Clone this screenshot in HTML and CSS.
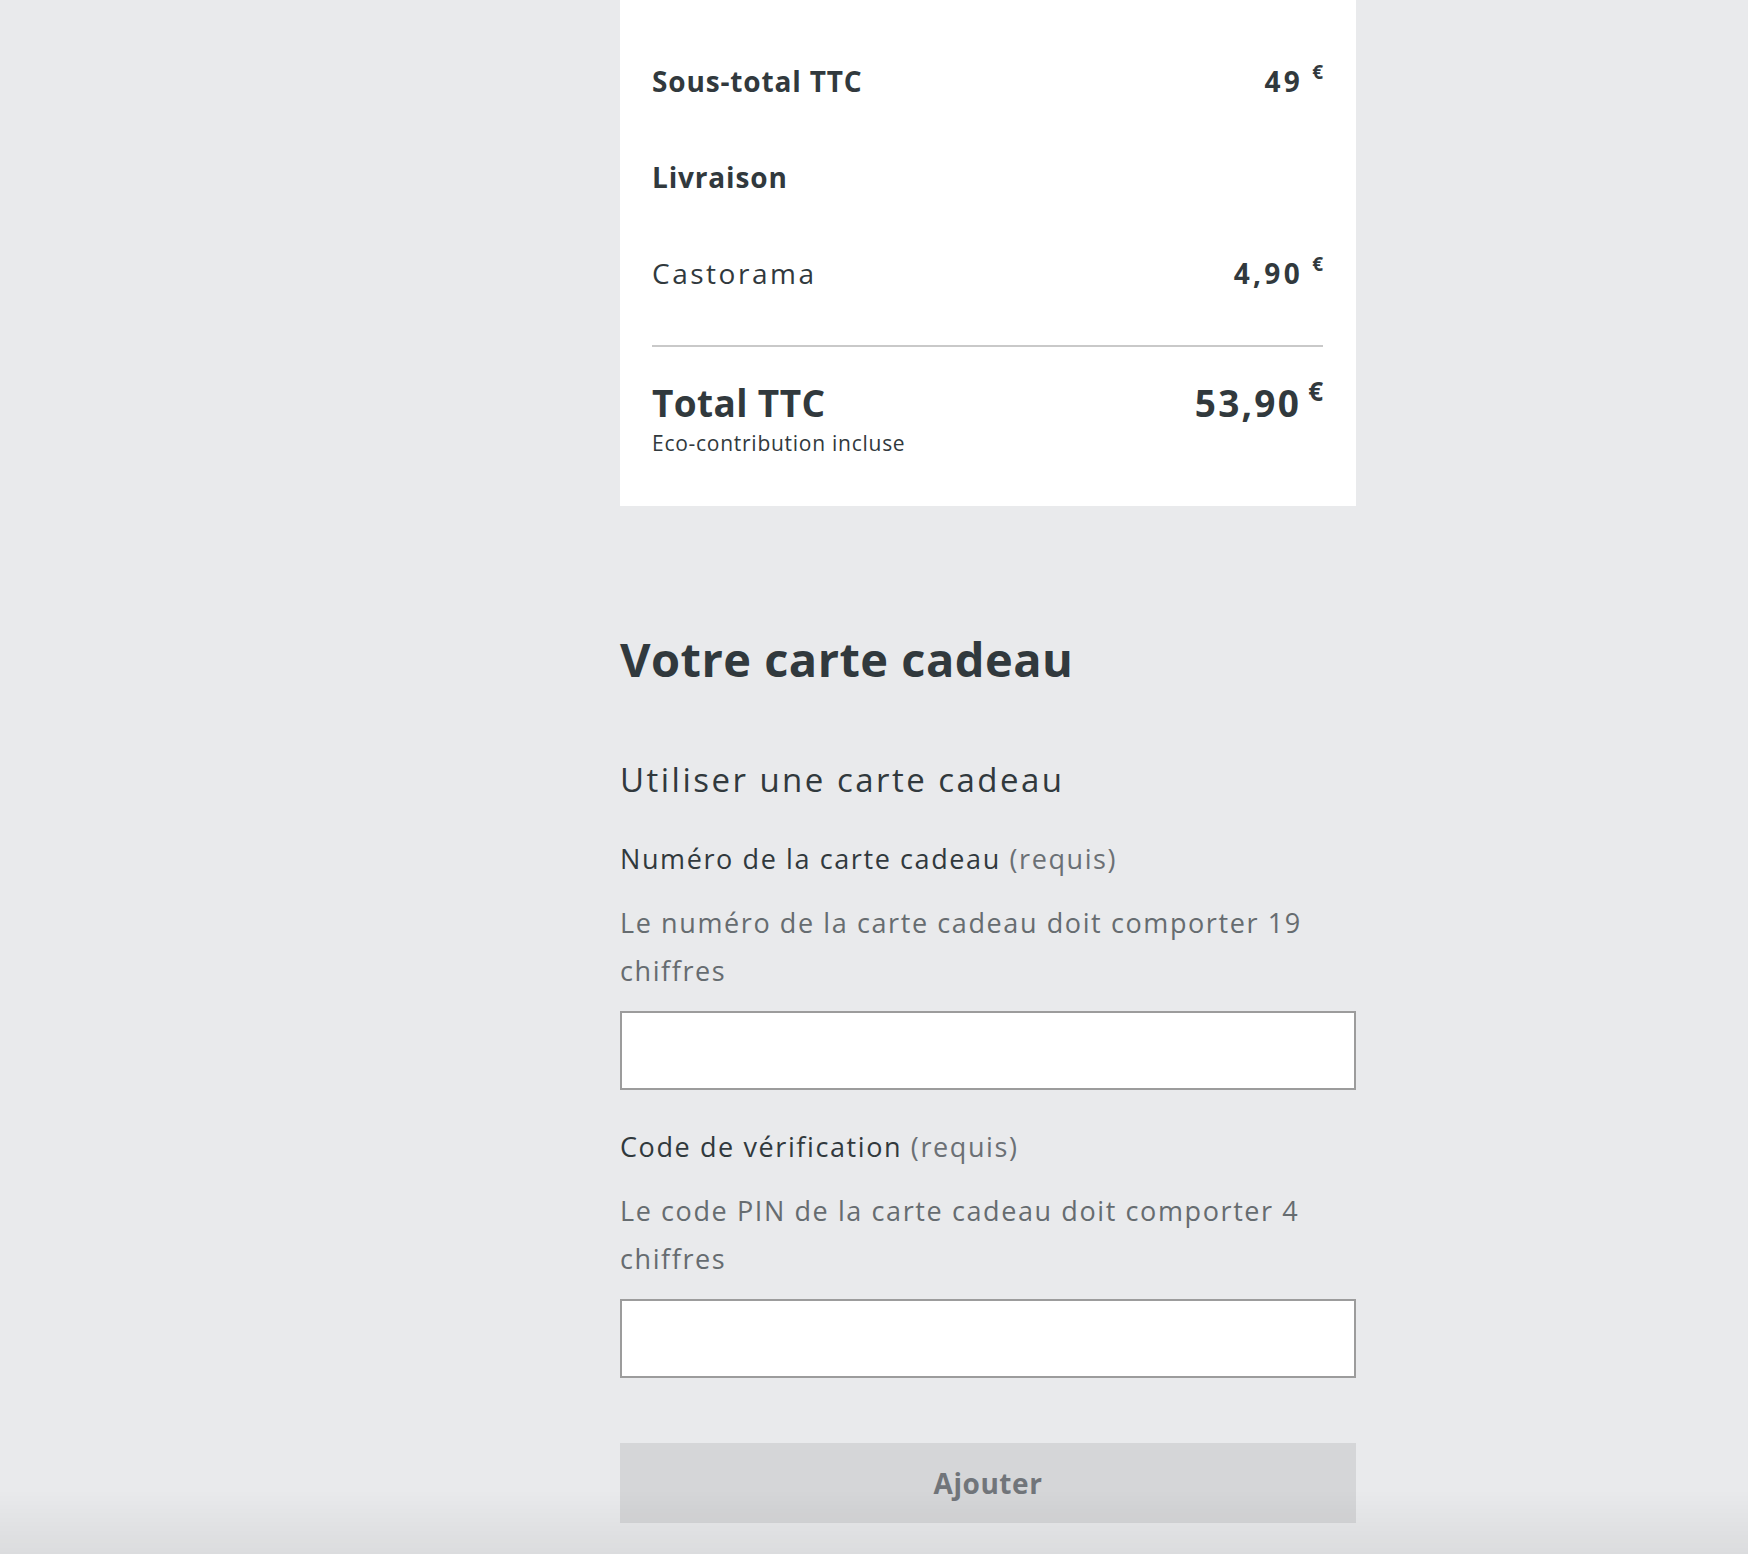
FILE: index.html
```html
<!DOCTYPE html>
<html lang="fr">
<head>
    <meta charset="UTF-8">
    <meta name="viewport" content="width=device-width, initial-scale=1.0">
    <title>Panier - Castorama</title>
    <link rel="stylesheet" href="styles.css">
</head>
<body>
    <main class="checkout">
        <!-- Order summary -->
        <section class="summary">
            <div class="summary-row">
                <span class="label-strong">Sous-total TTC</span>
                <span class="price">49<sup>€</sup></span>
            </div>
            <div class="summary-row">
                <span class="label-strong">Livraison</span>
            </div>
            <div class="summary-row">
                <span class="label">Castorama</span>
                <span class="price">4,90<sup>€</sup></span>
            </div>

            <div class="summary-total">
                <div>
                    <h3>Total TTC</h3>
                    <p class="eco">Eco-contribution incluse</p>
                </div>
                <span class="price price-total">53,90<sup>€</sup></span>
            </div>
        </section>

        <!-- Gift card -->
        <section class="gift-card">
            <h2>Votre carte cadeau</h2>
            <h4>Utiliser une carte cadeau</h4>

            <form class="gift-form" onsubmit="return false;">
                <div class="field">
                    <label for="card-number">Numéro de la carte cadeau <span class="required">(requis)</span></label>
                    <p class="hint">Le numéro de la carte cadeau doit comporter 19 chiffres</p>
                    <input type="text" id="card-number" name="card-number">
                </div>

                <div class="field">
                    <label for="card-pin">Code de vérification <span class="required">(requis)</span></label>
                    <p class="hint">Le code PIN de la carte cadeau doit comporter 4 chiffres</p>
                    <input type="text" id="card-pin" name="card-pin">
                </div>

                <button type="submit" class="btn-add" disabled>Ajouter</button>
            </form>
        </section>
    </main>

    <div class="bottom-fade"></div>
</body>
</html>
```

FILE: styles.css
```css
/* General Reset */
* {
    margin: 0;
    padding: 0;
    box-sizing: border-box;
}

body {
    font-family: "Open Sans", Lato, sans-serif;
    background-color: #e9eaec;
    color: #31393d;
    letter-spacing: 0.1em;
}

.checkout {
    width: 736px;
    margin-left: 620px;
    padding-bottom: 40px;
}

/* Order summary card */
.summary {
    background-color: #fff;
    padding: 57px 33px 48px 32px;
}

.summary-row {
    display: flex;
    justify-content: space-between;
    align-items: center;
    height: 48px;
    margin-bottom: 48px;
    font-size: 28px;
    line-height: 48px;
}

.summary-row:last-of-type {
    margin-bottom: 51px;
}

.label-strong {
    font-weight: 700;
    letter-spacing: 0.03em;
}

.label {
    font-weight: 400;
    letter-spacing: 0.09em;
}

.price {
    font-weight: 700;
    white-space: nowrap;
    letter-spacing: 0.12em;
}

.price sup {
    font-size: 19px;
    line-height: 0;
    margin-left: 9px;
    letter-spacing: 0;
    vertical-align: 13px;
}

.summary-total {
    display: flex;
    justify-content: space-between;
    align-items: flex-start;
    border-top: 2px solid #c9c9c9;
    padding-top: 34px;
}

.summary-total h3 {
    font-size: 37px;
    font-weight: 700;
    line-height: 44px;
    letter-spacing: 0.01em;
}

.eco {
    font-size: 21px;
    line-height: 30px;
    margin-top: 3px;
    letter-spacing: 0.035em;
}

.price-total {
    font-size: 37px;
    line-height: 44px;
    letter-spacing: 0.06em;
}

.price-total sup {
    font-size: 26px;
    margin-left: 7px;
    vertical-align: 16px;
}

/* Gift card form */
.gift-card {
    padding-top: 123px;
}

.gift-card h2 {
    font-size: 47px;
    font-weight: 700;
    line-height: 60px;
    letter-spacing: 0.01em;
}

.gift-card h4 {
    font-size: 33px;
    font-weight: 400;
    line-height: 44px;
    margin-top: 69px;
    letter-spacing: 0.075em;
}

.field {
    margin-top: 37px;
}

.field + .field {
    margin-top: 37px;
}

.field label {
    display: block;
    font-size: 27px;
    line-height: 40px;
}

.required {
    color: #6b7075;
}

.hint {
    font-size: 27px;
    line-height: 48px;
    color: #666c70;
    margin-top: 20px;
}

.field input {
    display: block;
    width: 100%;
    height: 79px;
    margin-top: 16px;
    border: 2px solid #9c9c9c;
    background-color: #fff;
    font-family: inherit;
    font-size: 27px;
    padding: 0 20px;
}

.btn-add {
    display: block;
    width: 100%;
    height: 80px;
    margin-top: 65px;
    border: none;
    background-color: #d5d6d8;
    color: #71757a;
    font-family: inherit;
    font-size: 28px;
    font-weight: 700;
    letter-spacing: 0.02em;
}

/* Shade at the bottom edge of the viewport */
.bottom-fade {
    position: fixed;
    left: 0;
    right: 0;
    bottom: 0;
    height: 64px;
    background: linear-gradient(to bottom, rgba(0, 0, 0, 0), rgba(0, 0, 0, 0.06));
    pointer-events: none;
}
```
